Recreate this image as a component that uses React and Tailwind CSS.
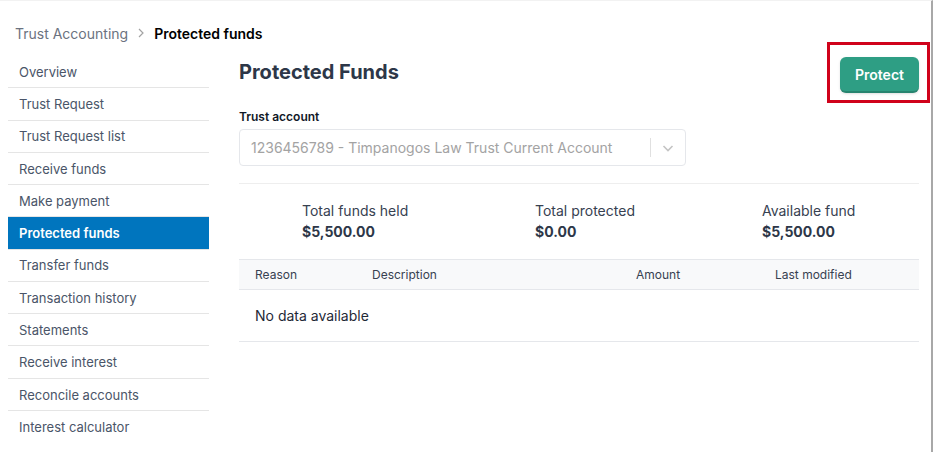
import React from "react";

const menu = [
  "Overview",
  "Trust Request",
  "Trust Request list",
  "Receive funds",
  "Make payment",
  "Protected funds",
  "Transfer funds",
  "Transaction history",
  "Statements",
  "Receive interest",
  "Reconcile accounts",
  "Interest calculator",
];

const stats = [
  { label: "Total funds held", value: "$5,500.00" },
  { label: "Total protected", value: "$0.00" },
  { label: "Available fund", value: "$5,500.00" },
];

export default function App() {
  return (
    <div
      className="w-[933px] h-[452px] bg-white border-t border-[#f2f2f2] border-r-2 border-r-[#a8a8a8] overflow-hidden pl-2"
      style={{ fontFamily: "Inter, 'Noto Sans', sans-serif" }}
    >
      {/* Breadcrumb */}
      <div className="flex items-center h-[22px] mt-[21px] ml-[7px] text-[14px]">
        <span className="text-[#6b7280]">Trust Accounting</span>
        <svg className="mx-[8px] text-[#a3a3a3]" width="10" height="10" viewBox="0 0 10 10" fill="none">
          <path d="M3 1l4 4-4 4" stroke="currentColor" strokeWidth="1.2" />
        </svg>
        <span className="font-semibold text-black">Protected funds</span>
      </div>

      <div className="flex mt-[12px]">
        {/* Sidebar */}
        <nav className="w-[201px] shrink-0 divide-y divide-[#e5e5e5]">
          {menu.map((item) => (
            <div
              key={item}
              className={`h-[32.27px] flex items-center pl-[11px] pt-[2px] text-[13px] ${
                item === "Protected funds"
                  ? "bg-[#0075be] text-white font-semibold"
                  : "text-[#4a5568]"
              }`}
            >
              {item}
            </div>
          ))}
        </nav>

        {/* Main */}
        <main className="ml-[30px] w-[680px]">
          <div className="flex justify-between items-start">
            <h1 className="text-[20px] leading-6 font-bold text-[#2d3748] mt-[4px]">Protected Funds</h1>
            <div className="relative mt-px">
              <button className="h-9 w-[79px] rounded-md bg-[#2e9e84] border-b-2 border-[#27846f] text-white text-[14px] font-semibold shadow-sm">
                Protect
              </button>
              <div className="absolute -left-[13px] -right-[11px] -top-[15px] -bottom-[10px] border-[3px] border-[#d0021b] pointer-events-none" />
            </div>
          </div>

          <label className="block mt-4 text-[12px] leading-4 font-semibold text-[#111827]">Trust account</label>
          <div className="mt-1 w-[447px] h-[37px] border border-[#e5e7eb] rounded flex items-center">
            <span className="flex-1 pl-[11px] text-[14px] text-[#a3a3a3] truncate">
              1236456789 - Timpanogos Law Trust Current Account
            </span>
            <span className="w-px h-[19px] bg-[#e0e0e0]" />
            <svg className="mx-[10px] text-[#c4c4c4]" width="14" height="14" viewBox="0 0 14 14" fill="none">
              <path d="M2.5 5l4.5 4.5L11.5 5" stroke="currentColor" strokeWidth="1.6" />
            </svg>
          </div>

          <div className="mt-[17px] border-t border-[#eeeeee]" />

          <div className="grid grid-cols-[233px_227px_1fr] pt-[17px] pl-[63px]">
            {stats.map((s) => (
              <div key={s.label}>
                <div className="text-[14px] leading-5 text-[#374151]">{s.label}</div>
                <div className="mt-px text-[14px] leading-5 font-bold text-[#2d3748]">{s.value}</div>
              </div>
            ))}
          </div>

          <div className="mt-[17px]">
            <div className="grid grid-cols-[117px_264px_139px_1fr] pl-4 h-[31px] items-center bg-[#f8f9fa] border-y border-[#e5e7eb] text-[12px] text-[#374151]">
              <span>Reason</span>
              <span>Description</span>
              <span>Amount</span>
              <span>Last modified</span>
            </div>
            <div className="h-[52px] flex items-center pl-4 border-b border-[#e5e7eb] text-[14px] text-[#1f2937]">
              No data available
            </div>
          </div>
        </main>
      </div>
    </div>
  );
}
